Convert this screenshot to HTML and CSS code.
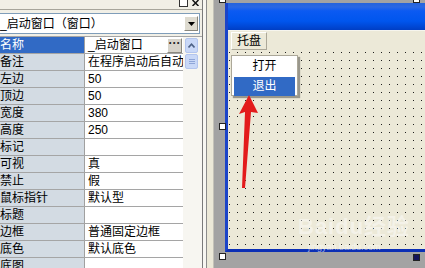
FILE: index.html
```html
<!DOCTYPE html>
<html lang="zh-CN">
<head>
    <meta charset="UTF-8">
    <title>启动窗口</title>
    <link rel="stylesheet" href="styles.css">
</head>
<body>

<div class="screen">

    <div class="propPanel">
        <div class="topBar">
            <span class="miniBtn"></span>
            <span class="miniBtn closeBtn">
                <svg width="7" height="6" viewBox="0 0 7 6"><path d="M0.5 0L6.5 6M6.5 0L0.5 6" stroke="#111" stroke-width="1.5"/></svg>
            </span>
        </div>

        <div class="combo">
            <span class="comboText">_启动窗口（窗口）</span>
            <span class="comboBtn">
                <svg width="7" height="4" viewBox="0 0 7 4"><path d="M0 0h7L3.5 4z" fill="#000"/></svg>
            </span>
        </div>

        <div class="propGrid">
            <div class="rows">
                <div class="row selected"><div class="name">名称</div><div class="value"><span>_启动窗口</span><span class="dotsBtn">···</span></div></div>
                <div class="row"><div class="name">备注</div><div class="value">在程序启动后自动</div></div>
                <div class="row"><div class="name">左边</div><div class="value">50</div></div>
                <div class="row"><div class="name">顶边</div><div class="value">50</div></div>
                <div class="row"><div class="name">宽度</div><div class="value">380</div></div>
                <div class="row"><div class="name">高度</div><div class="value">250</div></div>
                <div class="row"><div class="name">标记</div><div class="value"></div></div>
                <div class="row"><div class="name">可视</div><div class="value">真</div></div>
                <div class="row"><div class="name">禁止</div><div class="value">假</div></div>
                <div class="row"><div class="name">鼠标指针</div><div class="value">默认型</div></div>
                <div class="row"><div class="name">标题</div><div class="value"></div></div>
                <div class="row"><div class="name">边框</div><div class="value">普通固定边框</div></div>
                <div class="row"><div class="name">底色</div><div class="value">默认底色</div></div>
                <div class="row"><div class="name">底图</div><div class="value"></div></div>
            </div>

            <div class="scrollTrack">
                <div class="scrollBtn">
                    <svg width="7" height="5" viewBox="0 0 7 5"><path d="M0.5 4.5L3.5 1.2L6.5 4.5" fill="none" stroke="#4d6185" stroke-width="1.6"/></svg>
                </div>
                <div class="scrollThumb">
                    <span></span><span></span><span></span>
                </div>
            </div>
        </div>
    </div>

    <div class="splitter"></div>

    <div class="designer">
        <div class="formWin">
            <div class="titleBar"></div>
            <div class="menuBar">
                <span class="menuItem">托盘</span>
            </div>
            <div class="client"></div>
        </div>
    </div>

    <!-- popup menu and marks lie over the designer -->
    <div class="popup">
        <div class="popupItem">打开</div>
        <div class="popupItem active">退出</div>
    </div>

    <span class="handle h1"></span>
    <span class="handle h2"></span>
    <span class="handle h3"></span>
    <span class="handle h4"></span>
    <span class="handle h5"></span>

    <div class="watermark">Baidu经验</div>
    <div class="watermarkUrl">jingyan.baidu.com</div>

    <svg class="arrow" width="425" height="268" viewBox="0 0 425 268">
        <polygon points="249,95 258,113 251,112 245,188 242,188 245,112 239,114" fill="#e31b1b"/>
    </svg>

</div>

</body>
</html>
```

FILE: styles.css
```css
* {
    box-sizing: border-box;
}

body {
    margin: 0;
    width: 425px;
    height: 268px;
    overflow: hidden;
    background: #a3a3a3;
    font-family: "Liberation Sans", "Noto Sans CJK SC", sans-serif;
    font-size: 12px;
    color: #000;
}

.screen {
    position: relative;
    display: flex;
    height: 268px;
}

/* property panel */
.propPanel {
    width: 203px;
    flex: none;
    display: flex;
    flex-direction: column;
    background: #f1efe6;
    border-right: 1px solid #7a7a7a;
}

.topBar {
    height: 10px;
    border-bottom: 1px solid #a7a59b;
    display: flex;
    justify-content: flex-end;
    gap: 3px;
    padding-right: 2px;
}

.miniBtn {
    width: 9px;
    height: 7px;
    border: 1px solid #333;
    border-top: none;
    background: #fff;
}

.closeBtn {
    border: none;
    background: none;
    display: flex;
    justify-content: center;
}

.combo {
    margin: 3px 0 2px -2px;
    width: 202px;
    height: 21px;
    border: 1px solid #7f9db9;
    background: #fff;
    display: flex;
    align-items: center;
    padding: 0 1px;
}

.comboText {
    flex: 1;
    line-height: 16px;
    white-space: nowrap;
}

.comboBtn {
    width: 14px;
    height: 15px;
    background: #dedbd0;
    border: 1px solid;
    border-color: #fff #8a887e #8a887e #fff;
    display: flex;
    align-items: center;
    justify-content: center;
}

.propGrid {
    flex: 1;
    display: flex;
    border-top: 1px solid #a5a5a5;
    overflow: hidden;
}

.rows {
    width: 183px;
    flex: none;
    background: #fff;
}

.row {
    height: 17px;
    display: flex;
    border-bottom: 1px solid #a5a5a5;
    line-height: 16px;
}

.name {
    width: 85px;
    flex: none;
    background: #d3dbe3;
    border-right: 1px solid #a0a0a0;
    overflow: hidden;
    white-space: nowrap;
}

.value {
    flex: 1;
    display: flex;
    align-items: center;
    padding-left: 3px;
    overflow: hidden;
    white-space: nowrap;
}

.selected .name {
    background: #316ac5;
    color: #fff;
}

.dotsBtn {
    margin-left: auto;
    margin-right: 1px;
    width: 15px;
    height: 15px;
    background: #d6d3ca;
    border: 1px solid;
    border-color: #fff #8a887e #8a887e #fff;
    font-weight: bold;
    font-size: 12px;
    line-height: 9px;
    text-align: center;
    color: #222;
}

.scrollTrack {
    flex: 1;
    background: #f7f6f1;
    padding-left: 2px;
}

.scrollBtn,
.scrollThumb {
    width: 13px;
    height: 15px;
    margin-top: 1px;
    background: #c9d8f7;
    border: 1px solid #b3c5ee;
    border-radius: 2px;
    display: flex;
    align-items: center;
    justify-content: center;
}

.scrollThumb {
    flex-direction: column;
    gap: 1px;
}

.scrollThumb span {
    width: 6px;
    height: 1px;
    background: #8fa6d8;
}

.splitter {
    width: 11px;
    flex: none;
    background: linear-gradient(to right, #f7f6f1 0 3px, #8c8c8c 3px 4px, #ece9d8 4px 10px, #c4c2b8 10px);
}

/* form designer */
.designer {
    flex: 1;
    overflow: hidden;
    padding: 3px 0 0 11px;
}

.formWin {
    width: 240px;
    border-left: 3px solid #1b44c8;
    border-bottom: 3px solid #0b2fb5;
}

.titleBar {
    height: 27px;
    background: linear-gradient(#2563dc 0, #2a68e4 4px, #0b5af2 8px, #0056ee 18px, #0049d8 23px, #003ec4 27px);
}

.menuBar {
    height: 19px;
    background: #ece9d8;
    border-top: 1px solid #f6f5ee;
    padding: 1px 0 0 3px;
}

.menuItem {
    display: inline-block;
    height: 18px;
    padding: 0 5px;
    line-height: 16px;
    border: 1px solid;
    border-color: #fff #aca899 #aca899 #fff;
}

.client {
    height: 200px;
    background: conic-gradient(from 270deg at 1px 1px, #1e1e1e 90deg, transparent 0) 1px 3px / 8px 8px, #ece9d8;
}

.popup {
    position: absolute;
    left: 231px;
    top: 55px;
    width: 67px;
    height: 41px;
    background: #fff;
    border: 1px solid #aca899;
    padding: 0 2px;
    box-shadow: 2px 2px 1px rgba(0, 0, 0, 0.35);
}

.popupItem {
    height: 19px;
    margin-top: 1px;
    line-height: 19px;
    text-align: center;
}

.popupItem.active {
    background: #316ac5;
    color: #fff;
}

.handle {
    position: absolute;
    width: 7px;
    height: 7px;
    border: 1px solid #222;
    background: #fff;
}

.h1 { left: 219px; top: -4px; }
.h2 { left: 413px; top: -4px; }
.h3 { left: 219px; top: 123px; }
.h4 { left: 219px; top: 253px; }
.h5 { left: 413px; top: 254px; background: #14145a; }

.watermark {
    position: absolute;
    left: 298px;
    top: 214px;
    font-size: 22px;
    line-height: 26px;
    font-weight: bold;
    color: rgba(255, 255, 255, 0.45);
    letter-spacing: 1px;
}

.watermarkUrl {
    position: absolute;
    left: 308px;
    top: 242px;
    font-size: 9px;
    line-height: 10px;
    color: rgba(255, 255, 255, 0.6);
}

.arrow {
    position: absolute;
    left: 0;
    top: 0;
    pointer-events: none;
}
```
